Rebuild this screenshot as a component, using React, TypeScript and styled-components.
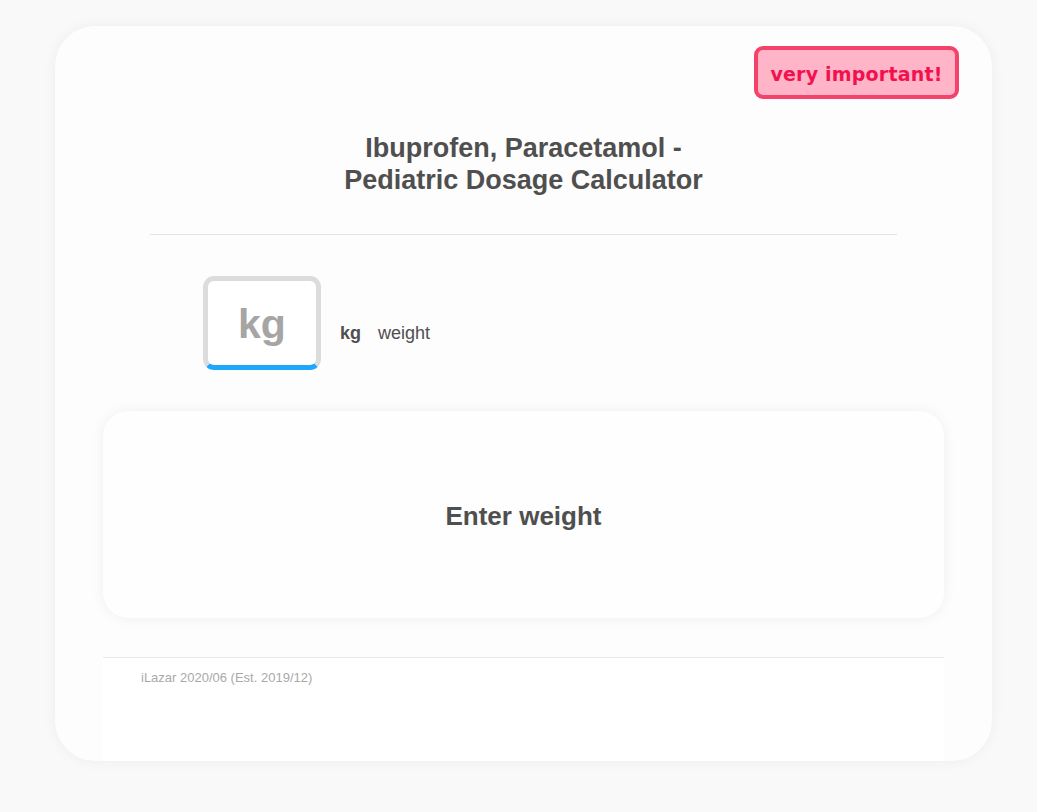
import React, { useState } from "react";
import styled, { createGlobalStyle } from "styled-components";

const GlobalStyle = createGlobalStyle`
  html, body {
    margin: 0;
    padding: 0;
    background: #f9f9f9;
    font-family: "Liberation Sans", Arial, sans-serif;
    color: #505050;
  }
`;

const Page = styled.div`
  padding: 26px 0 51px 55px;
`;

const Card = styled.main`
  width: 937px;
  height: 735px;
  box-sizing: border-box;
  background: #fdfdfd;
  border-radius: 40px;
  box-shadow: 0 0 14px rgba(0, 0, 0, 0.05);
  padding: 20px 48px 0;
  display: flex;
  flex-direction: column;
  overflow: hidden;
`;

const TopBar = styled.div`
  display: flex;
  justify-content: flex-end;
  margin-right: -15px;
`;

const Badge = styled.div`
  width: 205px;
  height: 53px;
  box-sizing: border-box;
  padding-top: 3px;
  display: flex;
  align-items: center;
  justify-content: center;
  background: #ffb4c8;
  border: 4px solid #f5426a;
  border-radius: 9px;
  color: #f2114f;
  font-family: "DejaVu Sans", Verdana, sans-serif;
  font-weight: 700;
  font-size: 19px;
  letter-spacing: 0.2px;
`;

const Title = styled.h1`
  margin: 33px 0 0;
  text-align: center;
  font-size: 27px;
  line-height: 32px;
  font-weight: 700;
  color: #4f4f4f;
`;

const Divider = styled.hr`
  width: 747px;
  margin: 38px auto 0;
  border: 0;
  border-top: 1px solid #e4e4e4;
`;

const InputRow = styled.div`
  display: flex;
  align-items: center;
  margin-top: 41px;
  padding-left: 100px;
`;

const UnitBox = styled.div`
  width: 118px;
  height: 94px;
  box-sizing: border-box;
  padding-top: 3px;
  border: 5px solid #dcdcdc;
  border-bottom-color: #1ea7fd;
  border-radius: 11px;
  background: #fff;
  display: flex;
  align-items: center;
  justify-content: center;
  color: #a5a5a5;
  font-size: 41px;
  font-weight: 700;
`;

const Label = styled.span<{ $bold?: boolean }>`
  font-size: 18px;
  font-weight: ${(p) => (p.$bold ? 700 : 400)};
  color: #4f4f4f;
  margin-left: ${(p) => (p.$bold ? "19px" : "17px")};
  margin-top: 21px;
`;

const Result = styled.section`
  margin-top: 41px;
  height: 207px;
  padding-top: 3px;
  box-sizing: border-box;
  border-radius: 25px;
  background: #fefefe;
  box-shadow: 0 0 14px rgba(0, 0, 0, 0.06);
  display: flex;
  align-items: center;
  justify-content: center;
  font-size: 26px;
  font-weight: 700;
  color: #4f4f4f;
`;

const Footer = styled.footer`
  margin-top: 39px;
  flex: 1;
  background: #fff;
  border-top: 1px solid #e8e8e8;
  padding: 12px 38px;
  font-size: 13px;
  color: #a9a9a9;
`;

const App = () => {
  const [unit] = useState("kg");
  return (
    <Page>
      <GlobalStyle />
      <Card>
        <TopBar>
          <Badge>very important!</Badge>
        </TopBar>
        <Title>
          Ibuprofen, Paracetamol -
          <br />
          Pediatric Dosage Calculator
        </Title>
        <Divider />
        <InputRow>
          <UnitBox>{unit}</UnitBox>
          <Label $bold>{unit}</Label>
          <Label>weight</Label>
        </InputRow>
        <Result>Enter weight</Result>
        <Footer>iLazar 2020/06 (Est. 2019/12)</Footer>
      </Card>
    </Page>
  );
};

export default App;
